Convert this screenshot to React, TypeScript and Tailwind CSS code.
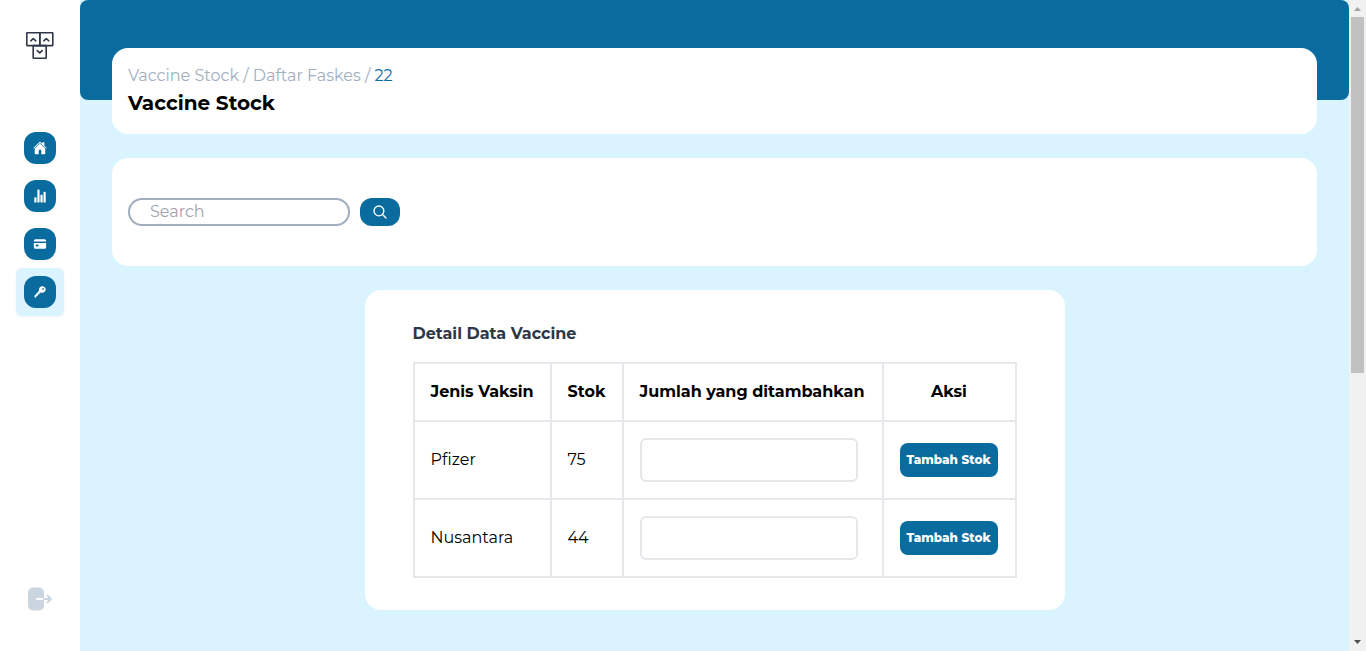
import { type ReactNode } from "react";
import { IoCard, IoHome, IoKey, IoSearchOutline, IoStatsChart } from "react-icons/io5";

const navItems: { label: string; icon: ReactNode; active?: boolean }[] = [
  { label: "Home", icon: <IoHome size={14} /> },
  { label: "Statistics", icon: <IoStatsChart size={14} /> },
  { label: "Cards", icon: <IoCard size={14} /> },
  { label: "Vaccine Stock", icon: <IoKey size={14} />, active: true },
];

const vaccines = [
  { name: "Pfizer", stock: 75 },
  { name: "Nusantara", stock: 44 },
];

function Logo() {
  return (
    <svg width="28" height="28" viewBox="0 0 28 28" fill="none" stroke="#2d3748" strokeWidth="1.6" strokeLinecap="round" strokeLinejoin="round" aria-hidden="true">
      <rect x="0.800" y="0.800" width="13" height="12.800" rx="0.5" />
      <rect x="13.800" y="0.800" width="13" height="12.800" rx="0.5" />
      <rect x="7.200" y="13.600" width="13" height="12.600" rx="0.5" />
      <path d="M4.800 8.800 7.300 6.500 9.800 8.800M17.800 8.800l2.500-2.300 2.500 2.300M11.200 18.600l2.500 2.300 2.500-2.300" />
    </svg>
  );
}

function LogoutIcon() {
  return (
    <svg width="24" height="24" viewBox="0 0 24 24" fill="none" aria-hidden="true">
      <rect x="0" y="0.500" width="16" height="23" rx="5" fill="#cbd5e0" />
      <path d="M9 12h7" stroke="#fff" strokeWidth="2" strokeLinecap="round" />
      <path d="M16 12h7M19.500 8.500 23 12l-3.500 3.500" stroke="#cbd5e0" strokeWidth="1.800" strokeLinecap="round" strokeLinejoin="round" />
    </svg>
  );
}

function Sidebar() {
  return (
    <aside className="flex w-20 shrink-0 flex-col items-center bg-white pt-8 pb-10">
      <a href="#home" aria-label="Dashboard" className="block h-7">
        <Logo />
      </a>
      <nav className="mt-16 flex flex-col">
        {navItems.map((item) => (
          <a
            key={item.label}
            href="#menu"
            aria-label={item.label}
            className={item.active ? "rounded-md bg-[#daf4ff] p-2 shadow-xs" : "p-2"}
          >
            <span className="flex size-8 items-center justify-center rounded-xl bg-[#0a6c9e] text-white">{item.icon}</span>
          </a>
        ))}
      </nav>
      <button type="button" aria-label="Logout" className="mt-auto">
        <LogoutIcon />
      </button>
    </aside>
  );
}

function ScrollRail() {
  return (
    <div className="flex w-[17px] shrink-0 flex-col items-center bg-[#f1f1f1]" aria-hidden="true">
      <svg width="17" height="17" viewBox="0 0 17 17" fill="#a3a3a3">
        <path d="M5 11 8.500 7 12 11z" />
      </svg>
      <div className="w-[13px] grow-[577] basis-0 bg-[#c1c1c1]" />
      <div className="grow-[423] basis-0" />
      <svg width="17" height="17" viewBox="0 0 17 17" fill="#505050">
        <path d="M5 6 8.500 10 12 6z" />
      </svg>
    </div>
  );
}

function StockTable() {
  return (
    <table className="w-full table-fixed border-collapse">
      <colgroup>
        <col className="w-[137px]" />
        <col className="w-[72px]" />
        <col className="w-[260px]" />
        <col />
      </colgroup>
      <thead>
        <tr className="h-[58px] text-left">
          <th className="border-2 border-gray-200 px-4 font-bold whitespace-nowrap">Jenis Vaksin</th>
          <th className="border-2 border-gray-200 px-4 font-bold">Stok</th>
          <th className="border-2 border-gray-200 px-4 font-bold whitespace-nowrap">Jumlah yang ditambahkan</th>
          <th className="border-2 border-gray-200 px-4 text-center font-bold">Aksi</th>
        </tr>
      </thead>
      <tbody>
        {vaccines.map((vaccine) => (
          <tr key={vaccine.name} className="h-[78px]">
            <td className="border-2 border-gray-200 px-4">{vaccine.name}</td>
            <td className="border-2 border-gray-200 px-4">{vaccine.stock}</td>
            <td className="border-2 border-gray-200 px-4">
              <input
                type="text"
                aria-label={`Jumlah ${vaccine.name}`}
                className="block h-11 w-[218px] rounded-md border-2 border-gray-200 px-3"
              />
            </td>
            <td className="border-2 border-gray-200 px-4">
              <button type="button" className="block h-[34px] w-[98px] rounded-lg bg-[#0a6c9e] text-xs font-extrabold whitespace-nowrap text-white">
                Tambah Stok
              </button>
            </td>
          </tr>
        ))}
      </tbody>
    </table>
  );
}

export default function App() {
  return (
    <div className="flex min-h-screen bg-white font-['Montserrat','Inter',sans-serif] text-base leading-6 font-normal text-black">
      <Sidebar />
      <main className="min-w-0 grow bg-[#daf4ff]">
        <div className="h-[100px] rounded-lg bg-[#0a6c9e]" />
        <div className="-mt-[52px] flex flex-col gap-6 px-8 pb-8">
          <header className="rounded-2xl bg-white p-4">
            <nav aria-label="Breadcrumb" className="text-[#a0aec0]">
              <a href="#stock">Vaccine Stock</a> / <a href="#faskes">Daftar Faskes</a> / <span className="text-[#0a6c9e]">22</span>
            </nav>
            <h1 className="text-xl leading-[30px] font-bold">Vaccine Stock</h1>
          </header>
          <form className="flex gap-[10px] rounded-2xl bg-white px-4 py-10" onSubmit={(event) => event.preventDefault()}>
            <input
              type="text"
              placeholder="Search"
              aria-label="Search"
              className="h-7 w-[222px] rounded-full border-2 border-[#a0aec0] px-5 pb-0.5 placeholder:text-[#a0a3ad]"
            />
            <button type="submit" aria-label="Submit search" className="flex h-7 w-10 items-center justify-center rounded-xl bg-[#0a6c9e] text-white">
              <IoSearchOutline size={16} className="[&_path]:stroke-[44px]" />
            </button>
          </form>
          <section className="w-[700px] max-w-full self-center rounded-2xl bg-white px-12 py-8">
            <h2 className="mb-4 font-bold text-[#2d3748]">Detail Data Vaccine</h2>
            <StockTable />
          </section>
        </div>
      </main>
      <ScrollRail />
    </div>
  );
}
